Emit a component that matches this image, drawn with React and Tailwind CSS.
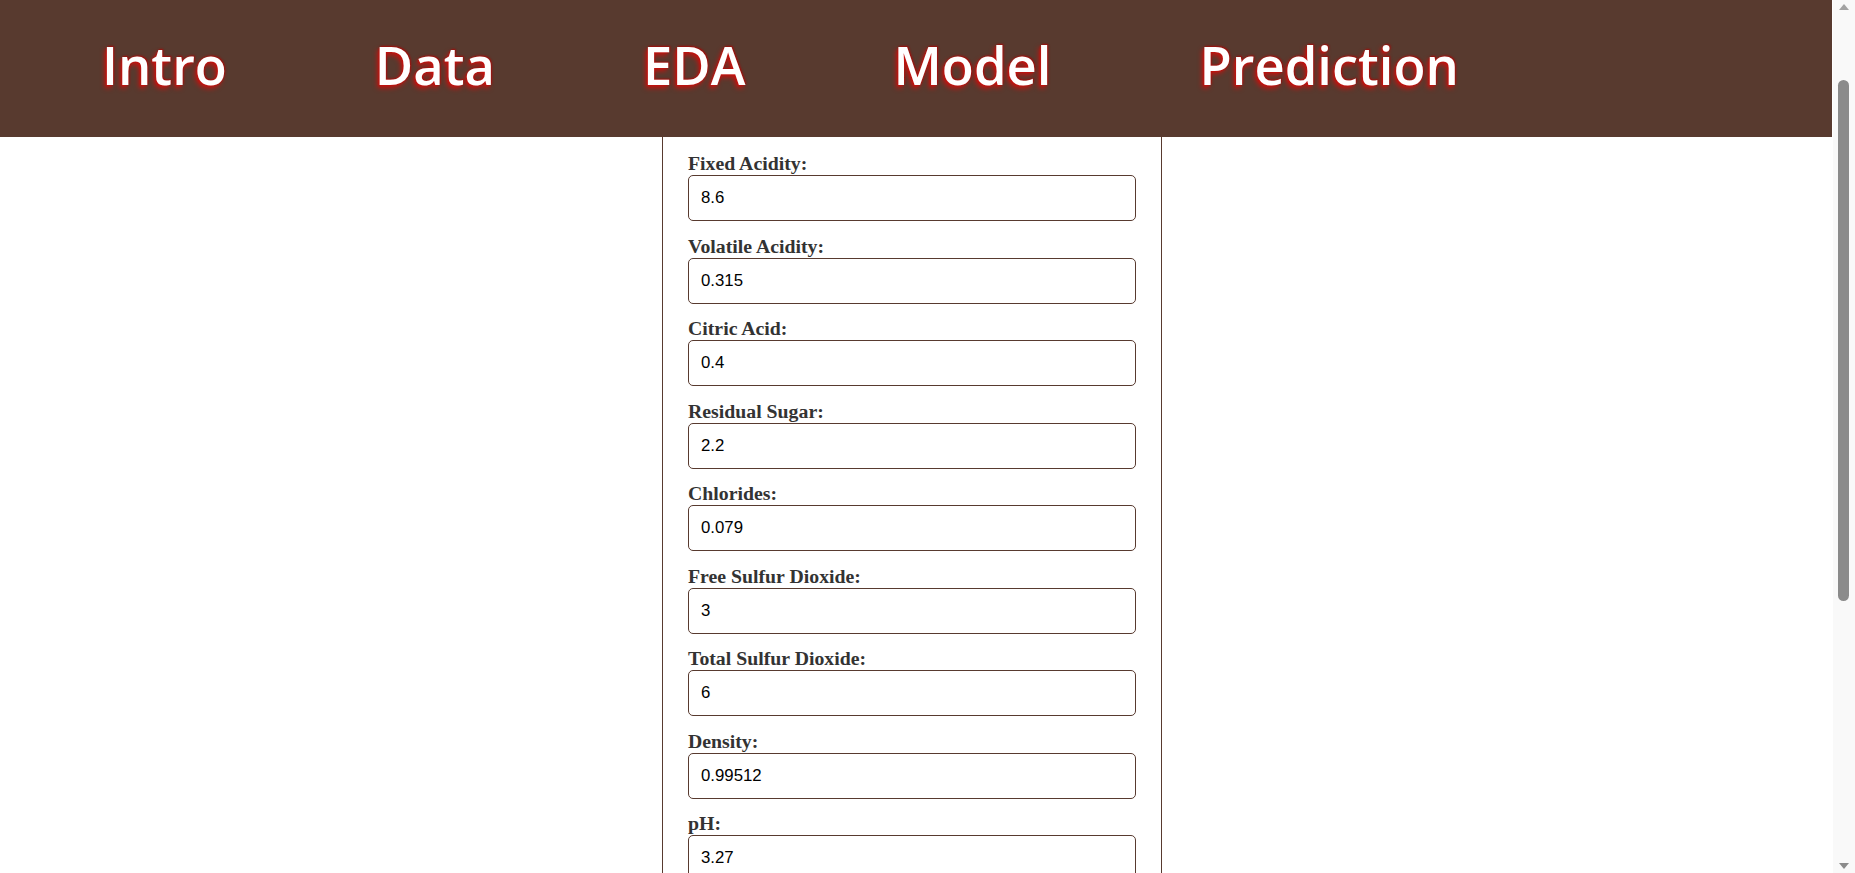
import React, { useState } from "react";

const navItems = ["Intro", "Data", "EDA", "Model", "Prediction"];

const initialFields = [
  { key: "fixed_acidity", label: "Fixed Acidity:", value: "8.6" },
  { key: "volatile_acidity", label: "Volatile Acidity:", value: "0.315" },
  { key: "citric_acid", label: "Citric Acid:", value: "0.4" },
  { key: "residual_sugar", label: "Residual Sugar:", value: "2.2" },
  { key: "chlorides", label: "Chlorides:", value: "0.079" },
  { key: "free_sulfur_dioxide", label: "Free Sulfur Dioxide:", value: "3" },
  { key: "total_sulfur_dioxide", label: "Total Sulfur Dioxide:", value: "6" },
  { key: "density", label: "Density:", value: "0.99512" },
  { key: "ph", label: "pH:", value: "3.27" },
  { key: "sulphates", label: "Sulphates:", value: "0.54" },
  { key: "alcohol", label: "Alcohol:", value: "12.5" },
];

// fake classic scrollbar, the page in the shot is scrolled a little
const ScrollBar = () => (
  <div aria-hidden="true" className="fixed top-0 right-0 h-screen w-[22px] bg-[#f9f9f9] flex flex-col items-center">
    <svg width="10" height="6" viewBox="0 0 10 6" className="mt-[4px]">
      <path d="M0 6 L5 0 L10 6 Z" fill="#a3a3a3" />
    </svg>
    <div className="mt-[70px] h-[521px] w-[11px] rounded-full bg-[#8b8b8b] -translate-x-[1px]" />
    <div className="flex-1" />
    <svg width="10" height="6" viewBox="0 0 10 6" className="mb-[4px]">
      <path d="M0 0 L10 0 L5 6 Z" fill="#8b8b8b" />
    </svg>
  </div>
);

const App = () => {
  const [fields, setFields] = useState(initialFields);

  const handleChange = (key, value) => {
    setFields(fields.map((f) => (f.key === key ? { ...f, value } : f)));
  };

  return (
    <div className="min-h-screen bg-white">
      <header className="w-[1832px] h-[137px] bg-[#583a2f] flex items-center pl-[102px] pb-[6px]">
        <nav className="flex gap-[148px]">
          {navItems.map((item) => (
            <a
              key={item}
              href="#"
              className="text-white font-semibold text-[52.5px] leading-none [font-family:'Open_Sans',sans-serif] [text-shadow:_-2px_3px_5px_#c8120e,_-1px_1px_2px_#b5100c,_1px_-1px_2px_#a00d0a]"
            >
              {item}
            </a>
          ))}
        </nav>
      </header>

      <div className="flex">
        <form className="ml-[662px] w-[500px] border-x border-[#583a2f] px-[25px] pt-[15px] pb-8">
          {fields.map((field) => (
            <div key={field.key} className="mb-[13.5px]">
              <label
                htmlFor={field.key}
                className="block text-[19.8px] leading-[22px] font-bold text-[#333] mb-[1px] [font-family:'Liberation_Serif',serif]"
              >
                {field.label}
              </label>
              <input
                id={field.key}
                type="text"
                value={field.value}
                onChange={(e) => handleChange(field.key, e.target.value)}
                className="block w-full h-[46px] border border-[#583a2f] rounded-[5px] px-[12px] text-[16.8px] text-black [font-family:'Liberation_Sans',sans-serif] outline-none"
              />
            </div>
          ))}
          <button
            type="button"
            className="w-full h-[46px] bg-[#583a2f] text-white rounded-[5px] text-[18px] font-bold [font-family:'Liberation_Serif',serif]"
          >
            Predict
          </button>
        </form>
      </div>

      <ScrollBar />
    </div>
  );
};

export default App;
